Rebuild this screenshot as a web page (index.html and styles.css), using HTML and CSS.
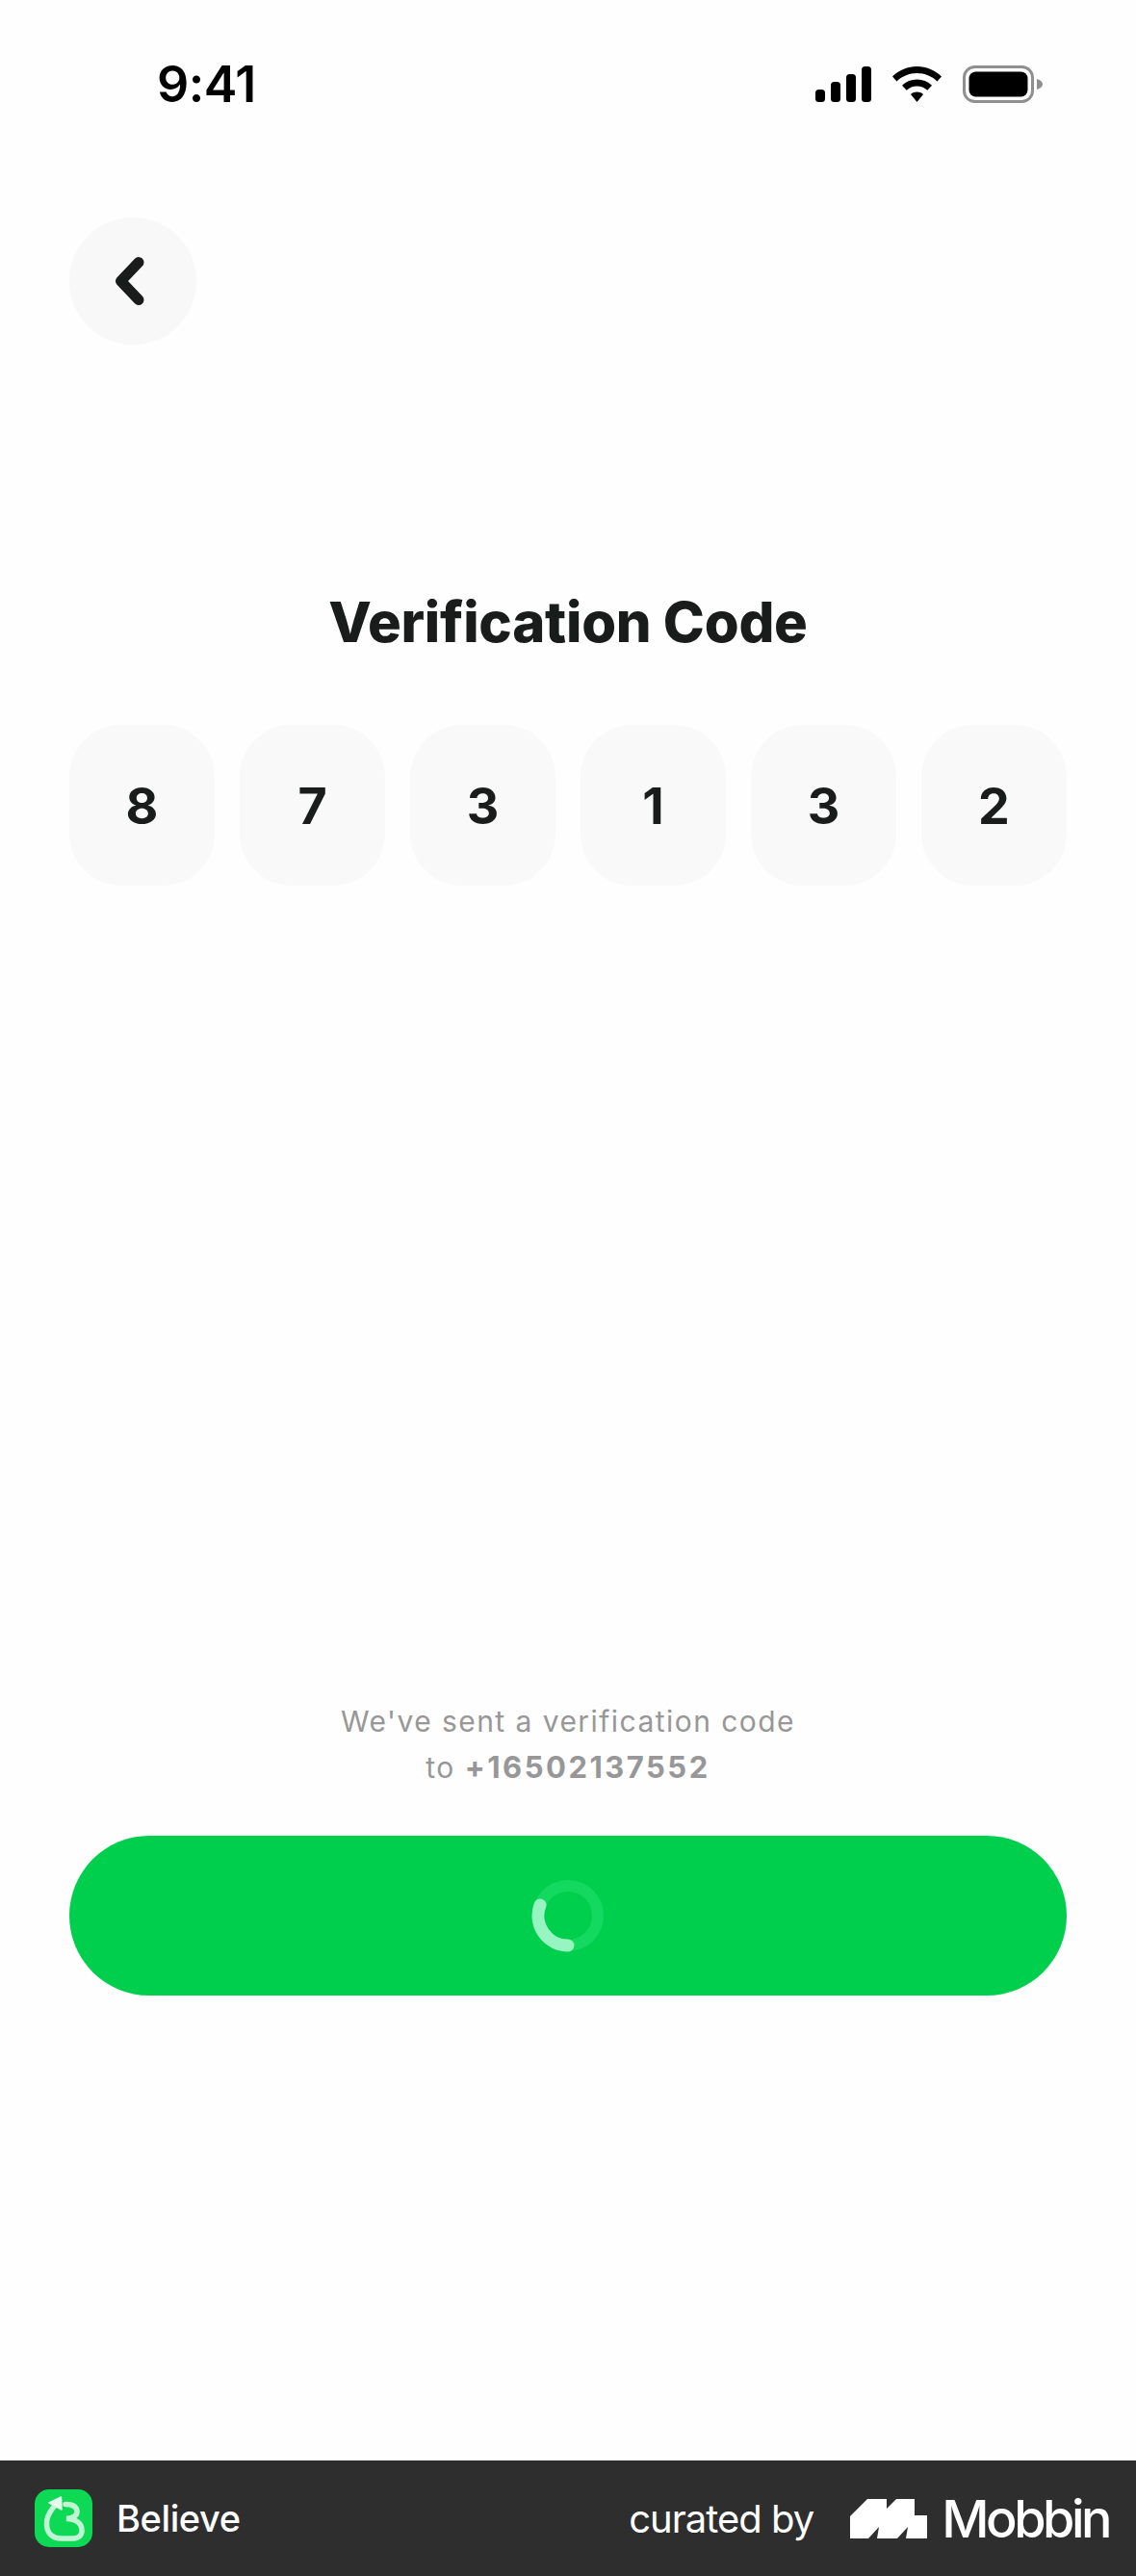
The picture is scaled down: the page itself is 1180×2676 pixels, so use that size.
FILE: index.html
```html
<!DOCTYPE html>
<html lang="en">
<head>
<meta charset="utf-8">
<title>Verification Code</title>
<link rel="stylesheet" href="styles.css">
</head>
<body>
<div class="screen">
  <div class="status">
    <span class="time">9:41</span>
    <div class="status-icons">
      <svg class="sig" width="58" height="37" viewBox="0 0 58 37"><rect x="0" y="24" width="10" height="13" rx="3.5"/><rect x="16" y="16" width="10" height="21" rx="3.5"/><rect x="32" y="8" width="10" height="29" rx="3.5"/><rect x="48" y="0" width="10" height="37" rx="3.5"/></svg>
      <svg class="wifi" width="51" height="37" viewBox="0 0 51 37"><path d="M25.5 0C35 0 44 3.700 51 10.500L46.500 15.500C40.800 10 33.500 7 25.500 7C17.500 7 10.200 10 4.500 15.500L0 10.500C7 3.700 16 0 25.500 0Z"/><path d="M25.500 13.500C31.300 13.500 36.700 15.700 41 19.700L36.300 24.700C33.300 22 29.500 20.500 25.500 20.500C21.500 20.500 17.700 22 14.700 24.700L10 19.700C14.300 15.700 19.700 13.500 25.500 13.500Z"/><path d="M25.500 26.500C27.900 26.500 30.100 27.300 32 28.900L25.500 37L19 28.900C20.900 27.300 23.100 26.500 25.500 26.500Z"/></svg>
      <svg class="batt" width="83" height="39" viewBox="0 0 83 39"><rect x="1.500" y="1.500" width="71" height="36" rx="11" fill="none" stroke="#8f8f8f" stroke-width="3"/><rect x="6.500" y="6.500" width="61" height="26" rx="7" fill="#000"/><path d="M77 14C80.500 15 83 17 83 19.500C83 22 80.500 24 77 25Z" fill="#8f8f8f"/></svg>
    </div>
  </div>
  <button class="back" type="button" aria-label="Back">
    <svg width="36" height="52" viewBox="0 0 36 52"><path d="M28 6.500L9.500 26L28 45.500" fill="none" stroke="#1a1c1c" stroke-width="11" stroke-linecap="round" stroke-linejoin="round"/></svg>
  </button>
  <h1 class="title">Verification Code</h1>
  <div class="code">
    <div class="digit">8</div>
    <div class="digit">7</div>
    <div class="digit">3</div>
    <div class="digit">1</div>
    <div class="digit">3</div>
    <div class="digit">2</div>
  </div>
  <div class="bottom">
    <p class="note">We've sent a verification code<br>to <b>+16502137552</b></p>
    <button class="submit" type="button" aria-label="Loading">
      <svg width="76" height="76" viewBox="0 0 76 76"><circle cx="38" cy="38" r="31" fill="none" stroke="#14d961" stroke-width="12"/><path d="M9 27A31 31 0 0 0 38 69" fill="none" stroke="#96f5c0" stroke-width="13" stroke-linecap="round"/></svg>
    </button>
  </div>
  <footer class="foot">
    <div class="app">
      <svg class="app-icon" width="60" height="60" viewBox="0 0 60 60"><rect width="60" height="60" rx="15" fill="#0ed955"/><path d="M20 18C15 24 12 31 12.500 37C13 46 19 51 28 51H40C46 51 49.500 47 49 42C48.500 35 43 31 33 30.500C40 30 44.500 27 44 22.500C43.500 18 39 15.500 32 15.500" fill="none" stroke="#bff5d4" stroke-width="5.500" stroke-linecap="round"/><path d="M27.500 8L15 14L28 21Z" fill="#e4fbec" stroke="#e4fbec" stroke-width="1.500" stroke-linejoin="round"/></svg>
      <span class="app-name">Believe</span>
    </div>
    <div class="credit">
      <span class="curated">curated by</span>
      <svg class="mob-logo" width="80" height="41" viewBox="0 0 80 41"><path d="M0 18L18 0H38V10L48 0H67V17H80V41H58L60 29L49 41H28L30 29L19 41H0Z" fill="#fff"/></svg>
      <span class="mob-name">Mobbin</span>
    </div>
  </footer>
</div>
</body>
</html>
```
FILE: styles.css
```css
* { box-sizing: border-box; }
html, body { margin: 0; padding: 0; background: #fefefe; }
body { font-family: Inter, "Liberation Sans", sans-serif; }
.screen { width: 1180px; height: 2676px; display: flex; flex-direction: column; }
.status { height: 226px; display: flex; justify-content: space-between; align-items: flex-start; padding: 60px 97px 0 163px; flex: none; }
.time { font-size: 52px; line-height: 56px; font-weight: 600; letter-spacing: -0.5px; color: #000; }
.status-icons { display: flex; align-items: center; gap: 22px; padding-top: 8px; }
.back { width: 132px; height: 132px; margin-left: 72px; border: 0; padding: 0 8px 0 0; border-radius: 50%; background: #f8f8f8; display: flex; align-items: center; justify-content: center; flex: none; }
.title { margin: 254px 0 0; text-align: center; font-size: 58px; line-height: 68px; font-weight: 800; letter-spacing: -0.25px; color: #1a1c1c; flex: none; }
.code { display: grid; grid-template-columns: repeat(6, 151px); gap: 26px; margin: 73px 72px 0; flex: none; }
.digit { height: 167px; padding-top: 2px; border-radius: 54px; background: #f9f9f9; display: flex; align-items: center; justify-content: center; font-size: 52px; font-weight: 700; color: #1a1c1c; }
.bottom { flex: 1; display: flex; flex-direction: column; align-items: center; padding-top: 844px; }
.note { margin: 0; text-align: center; font-size: 30px; line-height: 48px; letter-spacing: 1.45px; color: #979797; }
.note b { font-size: 31px; font-weight: 700; letter-spacing: 2.5px; }
.submit { width: 1036px; height: 166px; margin-top: 47px; border: 0; padding: 0; border-radius: 83px; background: #00cf4d; display: flex; align-items: center; justify-content: center; flex: none; }
.foot { height: 120px; background: #2e2e2e; display: flex; justify-content: space-between; align-items: center; padding: 0 28px 0 36px; flex: none; color: #fff; }
.app { display: flex; align-items: center; gap: 25px; }
.app-name { font-size: 38px; font-weight: 500; letter-spacing: -0.4px; }
.credit { display: flex; align-items: center; }
.curated { font-size: 40px; font-weight: 400; letter-spacing: -1px; margin-right: 38px; }
.mob-logo { margin-right: 15px; }
.mob-name { font-size: 54px; font-weight: 500; letter-spacing: -3.5px; }
```
